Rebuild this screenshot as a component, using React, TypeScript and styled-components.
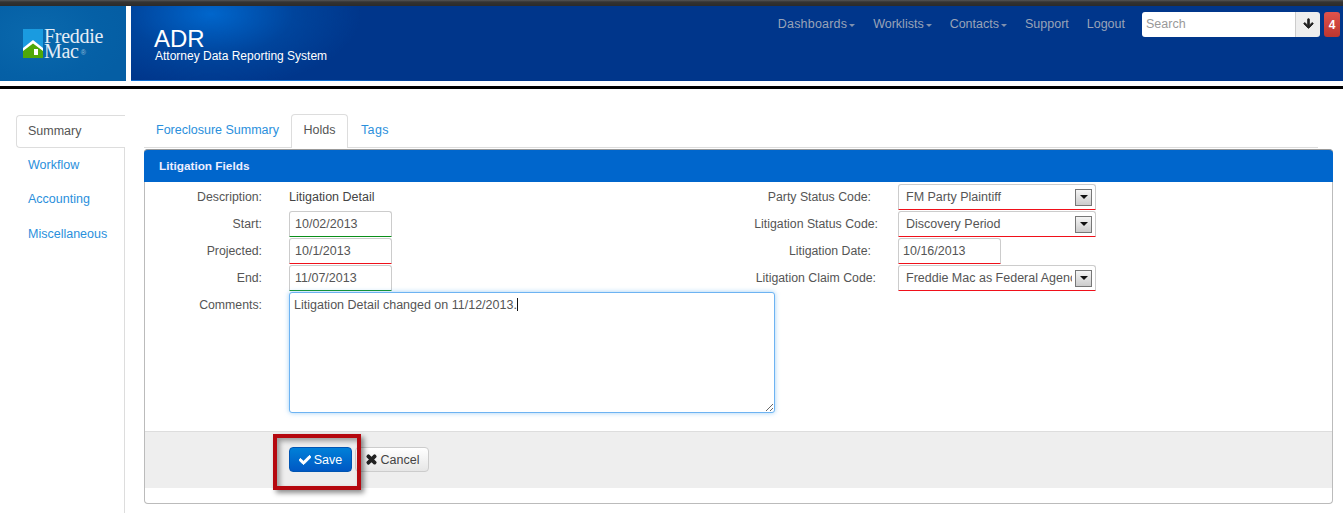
import React from "react";
import styled, { createGlobalStyle } from "styled-components";
import { FaArrowDown, FaCheck, FaTimes } from "react-icons/fa";

const Global = createGlobalStyle`
  html, body { margin: 0; padding: 0; height: 513px; overflow: hidden; background: #fff; }
  body { font-family: "Liberation Sans", Arial, sans-serif; font-size: 12px; color: #555; }
`;
const Page = styled.div`position: relative; width: 1343px; height: 513px; overflow: hidden;`;
const TopStrip = styled.div`height: 6px; background: linear-gradient(#555 0, #333 2px, #2b2b2b 100%);`;
const Header = styled.header`display: flex; height: 75px;`;
const LogoBlock = styled.div`
  width: 126px; display: flex; align-items: flex-start; padding: 23px 0 0 23px; box-sizing: border-box; color: #e4edf6;
  background: radial-gradient(ellipse 90px 60px at 30% 40%, #0a69ad, #0560a6 70%, #055ea4);
`;
const LogoMark = styled.svg`width: 20px; height: 29px; flex: none;`;
const LogoText = styled.div`
  font-family: "Liberation Serif", serif; font-size: 20px; line-height: 15px; margin-left: 1px; letter-spacing: -0.3px;
  sup { font-size: 7px; font-family: "Liberation Sans", sans-serif; opacity: .6; vertical-align: 3px; line-height: 0; margin-left: 2px; }
`;
const Banner = styled.div`
  flex: 1; margin-left: 5px; display: flex; justify-content: space-between; align-items: flex-start;
  background: radial-gradient(ellipse 150px 75px at 80px 8px, #0066cc, rgba(0,80,170,.55) 55%, rgba(0,54,139,0) 100%), #00368b;
  border-bottom: 1px solid transparent;
  border-image: linear-gradient(90deg, #0a6bd0 0, #0a6bd0 200px, #00368b 300px) 1;
  box-sizing: border-box;
`;
const Brand = styled.div`padding: 22px 0 0 23px; color: #fff;`;
const BrandTitle = styled.div`font-size: 24px; line-height: 21px;`;
const BrandSub = styled.div`font-size: 12px; line-height: 14px; margin-left: 1px;`;
const NavArea = styled.nav`display: flex; align-items: center; padding: 6px 3px 0 0;`;
const NavLink = styled.a<{ $spacing?: number }>`
  color: #99a3b8; font-size: 12.5px; line-height: 25px; margin-right: 18px; display: flex; align-items: center;
  letter-spacing: ${(p) => p.$spacing ?? 0}px;
`;
const Caret = styled.span`
  width: 0; height: 0; border: 3px solid transparent; border-top-color: #8090ad; border-bottom: 0; margin-left: 2px; margin-top: 1px;
`;
const SearchBox = styled.div`display: flex; height: 25px; width: 178px; margin-left: -1px; box-sizing: border-box;`;
const SearchInput = styled.div`
  flex: 1; background: #fff; color: #999; font-size: 12.5px; line-height: 25px; padding-left: 4px; border-radius: 3px 0 0 3px;
`;
const SearchButton = styled.div`
  width: 25px; background: #eee; border-left: 1px solid #ccc; border-radius: 0 3px 3px 0; box-sizing: border-box;
  display: flex; align-items: center; justify-content: center; color: #222; font-size: 11px; padding-bottom: 2px;
`;
const Badge = styled.div`
  width: 16px; height: 25px; margin-left: 4px; border-radius: 3px; color: #fff; font-weight: 700; font-size: 12px;
  display: flex; align-items: center; justify-content: center; background: linear-gradient(#e0534c, #bd362f);
`;
const Rule = styled.div`height: 3px; margin-top: 5px; background: #000;`;
const Main = styled.div`display: flex; height: 424px;`;
const Side = styled.aside`width: 125px; box-sizing: border-box; padding: 26px 0 0 16px; flex: none;`;
const SideNav = styled.div`height: 100%; border-right: 1px solid #ddd;`;
const SideItem = styled.a<{ $active?: boolean }>`
  display: block; height: ${(p) => (p.$active ? 33 : 34.3)}px; box-sizing: border-box; padding-left: 12px;
  font-size: 12.5px; line-height: ${(p) => (p.$active ? 31 : 35)}px;
  color: ${(p) => (p.$active ? "#555" : "#2a8fdc")};
  ${(p) => p.$active && `
    margin-right: -1px; background: #fff; border: 1px solid #ddd; border-right: 0; border-radius: 4px 0 0 4px; padding-left: 11px;
  `}
`;
const Content = styled.div`width: 1189px; margin-left: 19px; padding-top: 25px;`;
const Tabs = styled.div`display: flex; height: 33px; border-bottom: 1px solid #ddd; box-sizing: content-box; width: 1174px;`;
const Tab = styled.a<{ $active?: boolean; $spacing?: number }>`
  height: 33px; box-sizing: border-box; padding: 0 12px; line-height: 32px; font-size: 12.5px;
  color: ${(p) => (p.$active ? "#555" : "#2a8fdc")};
  letter-spacing: ${(p) => p.$spacing ?? 0}px;
  ${(p) => p.$active && `
    height: 34px; margin-right: 1px; background: #fff; border: 1px solid #ddd; border-bottom: 0; border-radius: 4px 4px 0 0; padding: 0 11.5px; line-height: 30px;
  `}
`;
const Panel = styled.section`
  margin-top: 1px; height: 355px; border: 1px solid #bbb; border-top: 0; border-radius: 4px; box-sizing: border-box;
  display: flex; flex-direction: column; background: #fff;
`;
const PanelHead = styled.h2`
  margin: 0 -1px; height: 33px; background: #0066cc; border-top: 1px solid #999; border-radius: 4px 4px 0 0; box-sizing: border-box;
  color: #eef; font-size: 11.8px; font-weight: 700; line-height: 33px; padding-left: 15px; flex: none;
`;
const FormBody = styled.div`display: flex; flex: none; height: 249px; box-sizing: border-box; padding-top: 2px;`;
const LeftCol = styled.div`width: 630px; flex: none;`;
const RightCol = styled.div`flex: 1; margin-left: -30px;`;
const Row = styled.div<{ $label: number }>`
  display: flex; height: 27px; box-sizing: border-box; padding-bottom: 1px; align-items: center;
  & > label { width: ${(p) => p.$label}px; flex: none; text-align: right; box-sizing: border-box; font-size: 12.3px; color: #555; }
`;
const TallRow = styled.div`
  display: flex; align-items: flex-start;
  & > label { width: 117px; flex: none; text-align: right; font-size: 12.3px; color: #555; padding-top: 6px; }
`;
const Control = styled.div<{ $gap: number }>`margin-left: ${(p) => p.$gap}px; display: flex; align-items: center;`;
const Static = styled.span`font-size: 12.5px; color: #444;`;
const DateField = styled.div<{ $ok?: boolean; $pad?: number }>`
  width: 103px; height: 26px; box-sizing: border-box; border: 1px solid #ccc; border-bottom: 1px solid ${(p) => (p.$ok ? "#0a8f1a" : "#f0101a")};
  border-radius: 3px 3px 1px 1px; padding-left: ${(p) => p.$pad ?? 5}px; line-height: 24px; font-size: 12.5px; color: #555; background: #fff;
`;
const SelectField = styled.div`
  width: 198px; height: 26px; box-sizing: border-box; border: 1px solid #ccc; border-bottom: 1px solid #f0101a; border-radius: 3px 3px 1px 1px;
  display: flex; align-items: center; padding: 0 3px 0 7px; background: #fff; font-size: 12.5px; color: #555;
`;
const SelectValue = styled.span`flex: 1; overflow: hidden; white-space: nowrap; margin-right: 3px; line-height: 24px;`;
const SelectArrow = styled.span`
  width: 17px; height: 17px; box-sizing: border-box; border: 1px solid #777; flex: none; display: flex; align-items: center; justify-content: center;
  background: linear-gradient(#f5f5f5, #ccc);
  &::after { content: ""; width: 0; height: 0; border: 4px solid transparent; border-top: 4px solid #111; border-bottom: 0; }
`;
const Comments = styled.div`
  width: 486px; height: 121px; margin: 0 0 0 27px; box-sizing: border-box; border: 1px solid #6db3f2; border-radius: 3px;
  box-shadow: 0 0 5px rgba(82,168,236,.55); padding: 4px 4px; font-size: 12.5px; color: #555; line-height: 17px;
  resize: both; overflow: auto; background: #fff;
`;
const TextCaret = styled.span`display: inline-block; width: 1px; height: 13px; background: #111; vertical-align: -2px;`;
const Footer = styled.div`
  height: 57px; box-sizing: border-box; background: #eee; border-top: 1px solid #ddd; display: flex; align-items: flex-start;
  padding: 15px 0 0 144px; gap: 3px; flex: none;
`;
const PrimaryButton = styled.button`
  width: 63px; height: 25px; border: 1px solid #0055b3; border-radius: 4px; padding: 0; color: #fff; font: 12.5px "Liberation Sans", sans-serif;
  background: linear-gradient(#0080d8, #0058c4); display: flex; align-items: center; justify-content: center; gap: 3px;
`;
const PlainButton = styled.button`
  width: 74px; height: 25px; border: 1px solid #ccc; border-radius: 4px; padding: 0; color: #444; font: 12.5px "Liberation Sans", sans-serif;
  background: linear-gradient(#fff, #e6e6e6); display: flex; align-items: center; justify-content: center; gap: 3px;
  svg { color: #222; }
`;
const Callout = styled.div`
  position: absolute; left: 273px; top: 434px; width: 88px; height: 56px; box-sizing: border-box; border: 4px solid #b5080f;
  box-shadow: 3px 3px 5px rgba(0,0,0,.45), inset 3px 3px 5px rgba(0,0,0,.35); pointer-events: none;
`;

export default function App() {
  return (
    <Page>
      <Global />
      <TopStrip />
      <Header>
        <LogoBlock>
          <LogoMark viewBox="0 0 20 29">
            <rect width="20" height="29" fill="#1a9be0" />
            <path d="M0 29V20L10 12 20 20V29Z" fill="#4fa80a" />
            <path d="M0 19L10 11 20 19V22L10 14.5 0 22Z" fill="#fff" />
            <rect x="11" y="20" width="4" height="6" fill="#fff" />
          </LogoMark>
          <LogoText>
            Freddie
            <br />
            Mac<sup>®</sup>
          </LogoText>
        </LogoBlock>
        <Banner>
          <Brand>
            <BrandTitle>ADR</BrandTitle>
            <BrandSub>Attorney Data Reporting System</BrandSub>
          </Brand>
          <NavArea>
            <NavLink $spacing={0.2}>Dashboards<Caret /></NavLink>
            <NavLink>Worklists<Caret /></NavLink>
            <NavLink>Contacts<Caret /></NavLink>
            <NavLink>Support</NavLink>
            <NavLink>Logout</NavLink>
            <SearchBox>
              <SearchInput>Search</SearchInput>
              <SearchButton><FaArrowDown stroke="currentColor" strokeWidth={40} /></SearchButton>
            </SearchBox>
            <Badge>4</Badge>
          </NavArea>
        </Banner>
      </Header>
      <Rule />
      <Main>
        <Side>
          <SideNav>
            <SideItem $active>Summary</SideItem>
            <SideItem>Workflow</SideItem>
            <SideItem>Accounting</SideItem>
            <SideItem>Miscellaneous</SideItem>
          </SideNav>
        </Side>
        <Content>
          <Tabs>
            <Tab>Foreclosure Summary</Tab>
            <Tab $active>Holds</Tab>
            <Tab $spacing={0.4}>Tags</Tab>
          </Tabs>
          <Panel>
            <PanelHead>Litigation Fields</PanelHead>
            <FormBody>
              <LeftCol>
                <Row $label={117}><label>Description:</label><Control $gap={27}><Static>Litigation Detail</Static></Control></Row>
                <Row $label={117}><label>Start:</label><Control $gap={27}><DateField $ok>10/02/2013</DateField></Control></Row>
                <Row $label={117}><label>Projected:</label><Control $gap={27}><DateField>10/1/2013</DateField></Control></Row>
                <Row $label={117}><label>End:</label><Control $gap={27}><DateField $ok>11/07/2013</DateField></Control></Row>
                <TallRow>
                  <label>Comments:</label>
                  <Comments>Litigation Detail changed on 11/12/2013.<TextCaret /></Comments>
                </TallRow>
              </LeftCol>
              <RightCol>
                <Row $label={126}><label>Party Status Code:</label><Control $gap={27}><SelectField><SelectValue>FM Party Plaintiff</SelectValue><SelectArrow /></SelectField></Control></Row>
                <Row $label={133}><label>Litigation Status Code:</label><Control $gap={20}><SelectField><SelectValue>Discovery Period</SelectValue><SelectArrow /></SelectField></Control></Row>
                <Row $label={126}><label>Litigation Date:</label><Control $gap={27}><DateField $pad={4}>10/16/2013</DateField></Control></Row>
                <Row $label={131}><label>Litigation Claim Code:</label><Control $gap={22}><SelectField><SelectValue>Freddie Mac as Federal Agency</SelectValue><SelectArrow /></SelectField></Control></Row>
              </RightCol>
            </FormBody>
            <Footer>
              <PrimaryButton><FaCheck size={12} stroke="currentColor" strokeWidth={40} />Save</PrimaryButton>
              <PlainButton><FaTimes size={13} stroke="currentColor" strokeWidth={50} />Cancel</PlainButton>
            </Footer>
          </Panel>
        </Content>
      </Main>
      <Callout />
    </Page>
  );
}
